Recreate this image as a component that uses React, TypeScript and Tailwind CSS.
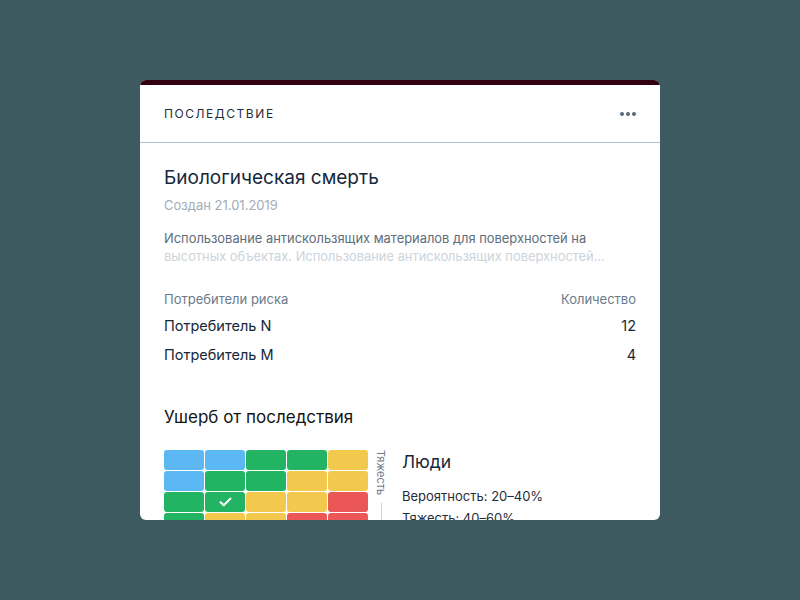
// Consequence card: header, consumers table and damage heat map
const CELL: Record<string, string> = {
  b: 'bg-[#5bb8f2]',
  g: 'bg-[#22b463]',
  y: 'bg-[#f2c94c]',
  r: 'bg-[#eb5757]',
};

const GRID = [
  ['b', 'b', 'g', 'g', 'y'],
  ['b', 'g', 'g', 'y', 'y'],
  ['g', 'g', 'y', 'y', 'r'],
  ['g', 'y', 'y', 'r', 'r'],
];

const CONSUMERS = [
  { name: 'Потребитель N', count: 12 },
  { name: 'Потребитель M', count: 4 },
];

function Check(): JSX.Element {
  return (
    <svg width="13" height="10" viewBox="0 0 13 10" fill="none" aria-hidden>
      <path d="M1.5 5.2 L4.8 8.3 L11.5 1.5" stroke="white" strokeWidth="2" strokeLinecap="round" strokeLinejoin="round" />
    </svg>
  );
}

export default function App(): JSX.Element {
  return (
    <div
      className="w-[800px] h-[600px] bg-[#3c5a60] flex items-center justify-center"
      style={{ fontFamily: 'Inter, "Noto Sans", sans-serif' }}
    >
      <section className="w-[520px] h-[440px] bg-white rounded-[6px] overflow-hidden flex flex-col">
        <div className="h-[5px] bg-[#33000f] shrink-0" />
        <header className="h-[58px] shrink-0 flex items-center justify-between px-6 border-b border-[#b3c3ce]">
          <span className="text-[12px] tracking-[0.13em] text-[#1f2d3a]">ПОСЛЕДСТВИЕ</span>
          <span className="flex items-center gap-[2px]" aria-hidden>
            <span className="w-1 h-1 rounded-full bg-[#5a6b7b]" />
            <span className="w-1 h-1 rounded-full bg-[#5a6b7b]" />
            <span className="w-1 h-1 rounded-full bg-[#5a6b7b]" />
          </span>
        </header>

        <div className="px-6 pt-[23px] flex flex-col">
          <h1 className="text-[19px] leading-6 text-[#15283a]">Биологическая смерть</h1>
          <p className="mt-[5px] text-[13px] leading-5 text-[#a3adb8]">Создан 21.01.2019</p>
          <p className="mt-[15px] text-[12.9px] leading-[18px]">
            <span className="block text-[#5e6d7c] whitespace-nowrap">
              Использование антискользящих материалов для поверхностей на
            </span>
            <span className="block text-[#cdd4db] whitespace-nowrap">
              высотных объектах. Использование антискользящих поверхностей…
            </span>
          </p>

          <div className="mt-[23px] flex justify-between text-[13px] leading-5 text-[#6b7a89]">
            <span>Потребители риска</span>
            <span>Количество</span>
          </div>
          <div className="mt-[7px] flex flex-col gap-[9px]">
            {CONSUMERS.map((c) => (
              <div key={c.name} className="flex justify-between text-[14.5px] leading-5 text-[#15283a]">
                <span>{c.name}</span>
                <span>{c.count}</span>
              </div>
            ))}
          </div>

          <h2 className="mt-10 text-[17px] leading-6 text-[#141414]">Ушерб от последствия</h2>

          <div className="mt-[21px] flex">
            <div className="grid grid-cols-[repeat(5,40px)] auto-rows-[20px] gap-px">
              {GRID.flatMap((row, ri) =>
                row.map((c, ci) => (
                  <div key={`${ri}-${ci}`} className={`${CELL[c]} rounded-[3px] flex items-center justify-center`}>
                    {ri === 2 && ci === 1 && <Check />}
                  </div>
                )),
              )}
            </div>
            <div className="ml-[7px] w-[12px] flex flex-col items-center">
              <span className="[writing-mode:vertical-rl] text-[11px] leading-3 text-[#6b7a89]">Тяжесть</span>
              <span className="mt-2 w-px h-10 bg-[#c9d1d9]" />
            </div>
            <div className="ml-[15px] flex flex-col">
              <span className="text-[17.5px] leading-6 text-[#15283a]">Люди</span>
              <span className="mt-[12px] text-[13px] leading-5 text-[#1f2d3a]">Вероятность: 20–40%</span>
              <span className="mt-[2px] text-[13px] leading-5 text-[#1f2d3a]">Тяжесть: 40–60%</span>
            </div>
          </div>
        </div>
      </section>
    </div>
  );
}
